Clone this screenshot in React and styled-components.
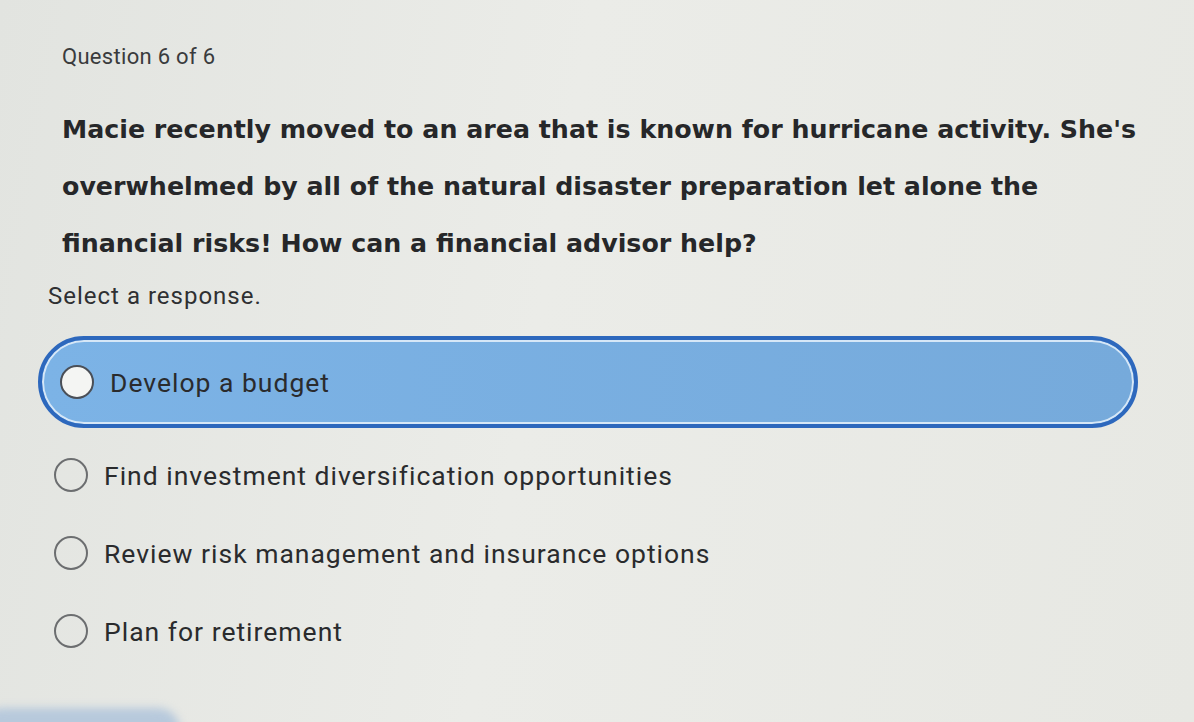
import React from "react";
import styled, { createGlobalStyle } from "styled-components";

const Global = createGlobalStyle`
  html, body { margin: 0; padding: 0; }
  body {
    width: 1194px; height: 722px; overflow: hidden;
    background: linear-gradient(100deg, #e2e4e0 0%, #ebece8 45%, #e7e8e3 100%);
    font-family: Roboto, "Liberation Sans", sans-serif;
    color: #2b2c2e;
  }
`;

const Page = styled.main`
  box-sizing: border-box;
  height: 722px;
  padding: 44px 56px 0 44px;
  display: flex;
  flex-direction: column;
  position: relative;
`;

const Counter = styled.div`
  font-size: 22px;
  color: #3a3b3d;
  padding-left: 18px;
  letter-spacing: 0.3px;
`;

const Prompt = styled.h1`
  margin: 32px 0 0 18px;
  font-family: "DejaVu Sans", Roboto, sans-serif;
  font-size: 25.3px;
  font-weight: 700;
  line-height: 57px;
  color: #262729;
  letter-spacing: 0px;
  white-space: nowrap;
`;

const Instruction = styled.div`
  margin: 10px 0 0 4px;
  font-size: 24px;
  color: #2f3032;
  letter-spacing: 1px;
`;

const Options = styled.div`
  margin-top: 26px;
  display: flex;
  flex-direction: column;
  gap: 16px;
`;

const Option = styled.label`
  box-sizing: border-box;
  display: flex;
  align-items: center;
  gap: 16px;
  height: ${(p) => (p.$selected ? "92px" : "62px")};
  width: 1100px;
  margin-left: -6px;
  padding-left: ${(p) => (p.$selected ? "18px" : "12px")};
  border-radius: 46px;
  background: ${(p) => (p.$selected ? "linear-gradient(90deg, #7cb3e6, #76aadb)" : "transparent")};
  border: ${(p) => (p.$selected ? "4px solid #2d68bd" : "4px solid transparent")};
  box-shadow: ${(p) => (p.$selected ? "inset 0 0 0 2px #d6e7f7" : "none")};
  font-size: 26.5px;
  color: #2a2b2d;
  letter-spacing: 1px;
`;

const Radio = styled.span`
  flex: none;
  width: 34px;
  height: 34px;
  border-radius: 50%;
  box-sizing: border-box;
  border: 2.5px solid ${(p) => (p.$selected ? "#4a4f57" : "#6c6e70")};
  background: ${(p) => (p.$selected ? "#f4f5f3" : "transparent")};
`;

const Footer = styled.div`
  position: absolute;
  left: -20px;
  bottom: -30px;
  width: 200px;
  height: 44px;
  border-radius: 22px;
  background: #b7c9dc;
  filter: blur(4px);
`;

const options = [
  "Develop a budget",
  "Find investment diversification opportunities",
  "Review risk management and insurance options",
  "Plan for retirement",
];

export default function App() {
  return (
    <>
      <Global />
      <Page>
        <Counter>Question 6 of 6</Counter>
        <Prompt>
          Macie recently moved to an area that is known for hurricane activity. She's
          <br />
          overwhelmed by all of the natural disaster preparation let alone the
          <br />
          financial risks! How can a financial advisor help?
        </Prompt>
        <Instruction>Select a response.</Instruction>
        <Options>
          {options.map((o, i) => (
            <Option key={o} $selected={i === 0}>
              <Radio $selected={i === 0} />
              {o}
            </Option>
          ))}
        </Options>
        <Footer />
      </Page>
    </>
  );
}
